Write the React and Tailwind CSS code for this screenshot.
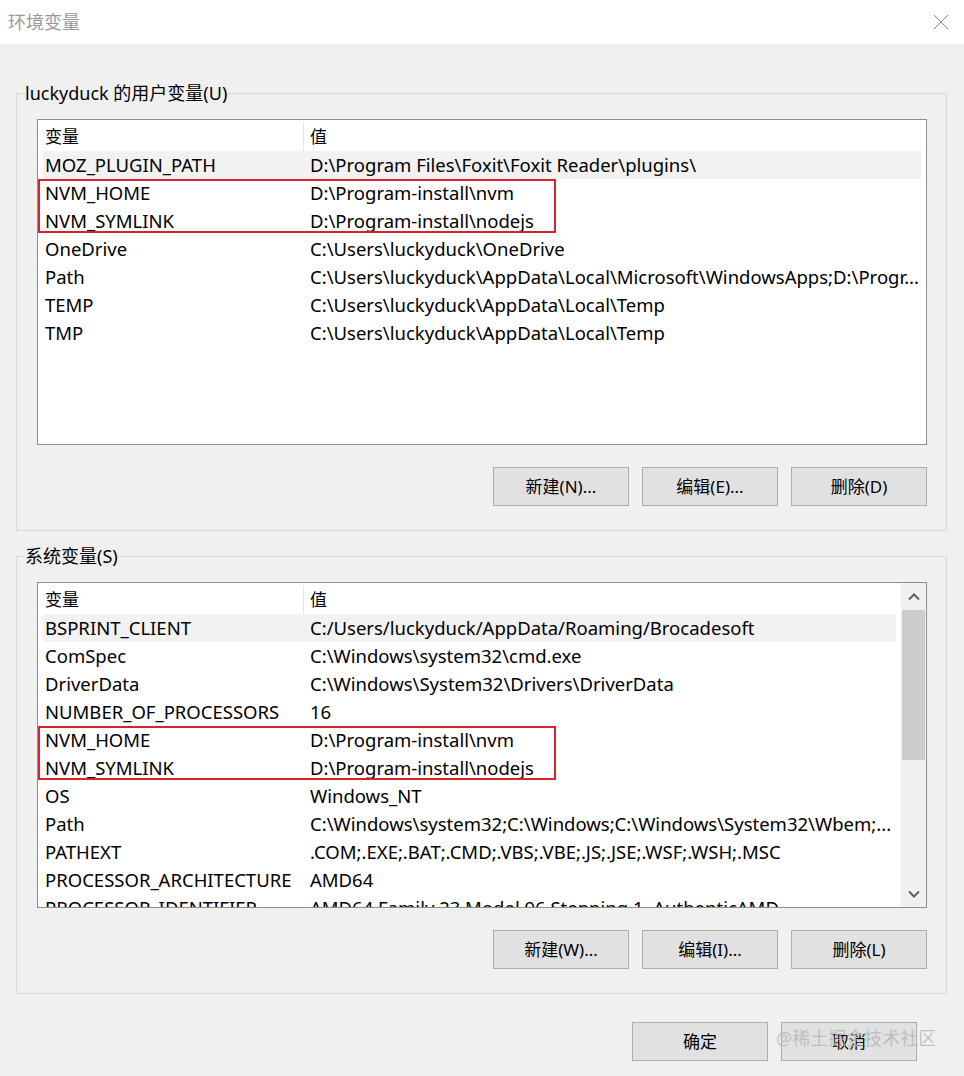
import React from 'react';

const userVars = [
  ['MOZ_PLUGIN_PATH', 'D:\\Program Files\\Foxit\\Foxit Reader\\plugins\\'],
  ['NVM_HOME', 'D:\\Program-install\\nvm'],
  ['NVM_SYMLINK', 'D:\\Program-install\\nodejs'],
  ['OneDrive', 'C:\\Users\\luckyduck\\OneDrive'],
  ['Path', 'C:\\Users\\luckyduck\\AppData\\Local\\Microsoft\\WindowsApps;D:\\Progr...'],
  ['TEMP', 'C:\\Users\\luckyduck\\AppData\\Local\\Temp'],
  ['TMP', 'C:\\Users\\luckyduck\\AppData\\Local\\Temp'],
];

const sysVars = [
  ['BSPRINT_CLIENT', 'C:/Users/luckyduck/AppData/Roaming/Brocadesoft'],
  ['ComSpec', 'C:\\Windows\\system32\\cmd.exe'],
  ['DriverData', 'C:\\Windows\\System32\\Drivers\\DriverData'],
  ['NUMBER_OF_PROCESSORS', '16'],
  ['NVM_HOME', 'D:\\Program-install\\nvm'],
  ['NVM_SYMLINK', 'D:\\Program-install\\nodejs'],
  ['OS', 'Windows_NT'],
  ['Path', 'C:\\Windows\\system32;C:\\Windows;C:\\Windows\\System32\\Wbem;...'],
  ['PATHEXT', '.COM;.EXE;.BAT;.CMD;.VBS;.VBE;.JS;.JSE;.WSF;.WSH;.MSC'],
  ['PROCESSOR_ARCHITECTURE', 'AMD64'],
  ['PROCESSOR_IDENTIFIER', 'AMD64 Family 23 Model 96 Stepping 1, AuthenticAMD'],
];

const font = { fontFamily: '"Noto Sans", "Noto Sans CJK SC", sans-serif' };

const WinButton = ({ children }) => (
  <button className="w-[136px] h-[39px] bg-[#e1e1e1] border border-[#adadad] text-[17px] text-black flex items-center justify-center">
    {children}
  </button>
);

const Chevron = ({ down }) => (
  <svg width="12" height="8" viewBox="0 0 12 8">
    <path
      d={down ? 'M1 1.5 L6 6.5 L11 1.5' : 'M1 6.5 L6 1.5 L11 6.5'}
      fill="none"
      stroke="#606060"
      strokeWidth="2"
    />
  </svg>
);

const ListView = ({ rows, scroll }) => (
  <div className="relative ml-[20px] w-[890px] h-[326px] border border-[#8f8f8f] bg-white flex overflow-hidden">
    <div className="flex-1 min-w-0 flex flex-col overflow-hidden">
      <div className="h-[31px] shrink-0 flex items-center text-[17px] pt-[2px]">
        <div className="w-[266px] h-full pl-[7px] flex items-center border-r border-[#e5e5e5]">变量</div>
        <div className="pl-[6px]">值</div>
      </div>
      {rows.map(([name, value], i) => (
        <div
          key={name + i}
          className={`h-[28px] shrink-0 mx-[5px] pl-[2px] flex items-center text-[18.5px] text-black whitespace-nowrap ${i === 0 ? 'bg-[#f2f2f2]' : ''}`}
        >
          <div className="w-[265px] shrink-0">{name}</div>
          <div className="flex-1 min-w-0 overflow-hidden">{value}</div>
        </div>
      ))}
    </div>
    {scroll && (
      <div className="w-[25px] shrink-0 bg-[#f0f0f0] flex flex-col">
        <div className="h-[27px] flex items-center justify-center">
          <Chevron />
        </div>
        <div className="h-[150px] mx-[1px] bg-[#cdcdcd]" />
        <div className="flex-1" />
        <div className="h-[27px] flex items-center justify-center">
          <Chevron down />
        </div>
      </div>
    )}
    {/* red annotation box over the nvm rows */}
    <div
      className="absolute left-0 w-[518px] h-[54px] border-2 border-[#d8232a]"
      style={{ top: scroll ? 143 : 59 }}
    />
  </div>
);

const Group = ({ label, rows, scroll, buttons, className }) => (
  <fieldset className={`mx-[16px] w-[931px] border border-[#d9d9d9] pb-[24px] ${className}`}>
    <legend className="ml-[7px] px-[1px] text-[18px] leading-[24px] text-black">{label}</legend>
    <div className="mt-[14px]">
      <ListView rows={rows} scroll={scroll} />
    </div>
    <div className="mt-[22px] pr-[19px] flex justify-end gap-[13px]">
      {buttons.map((b) => (
        <WinButton key={b}>{b}</WinButton>
      ))}
    </div>
  </fieldset>
);

export default function App() {
  return (
    <div className="relative w-[964px] h-[1076px] bg-[#f0f0f0] flex flex-col overflow-hidden" style={font}>
      <div className="h-[44px] shrink-0 bg-white flex items-center justify-between pl-[8px] pr-[15px]">
        <span className="text-[18px] text-[#9a9a9a]">环境变量</span>
        <svg width="16" height="16" viewBox="0 0 16 16">
          <path d="M1 1 L15 15 M15 1 L1 15" stroke="#8a8a8a" strokeWidth="1" fill="none" />
        </svg>
      </div>

      <Group
        className="mt-[37px]"
        label="luckyduck 的用户变量(U)"
        rows={userVars}
        buttons={['新建(N)...', '编辑(E)...', '删除(D)']}
      />

      <Group
        className="mt-[13px]"
        label="系统变量(S)"
        rows={sysVars}
        scroll
        buttons={['新建(W)...', '编辑(I)...', '删除(L)']}
      />

      <div className="mt-[28px] mr-[47px] flex justify-end gap-[13px]">
        <WinButton>确定</WinButton>
        <WinButton>取消</WinButton>
      </div>

      <div className="absolute left-[776px] top-[1025px] text-[18px] text-[#b4b4b4]/80 pointer-events-none">
        @稀土掘金技术社区
      </div>
    </div>
  );
}
